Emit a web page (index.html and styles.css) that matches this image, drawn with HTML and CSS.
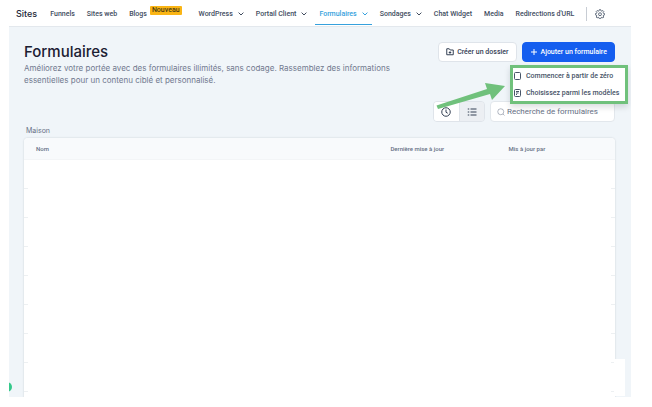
FILE: index.html
```html
<!DOCTYPE html>
<html lang="fr">
<head>
<meta charset="utf-8">
<title>Formulaires</title>
<link rel="stylesheet" href="styles.css">
</head>
<body>
<div class="app">
  <nav class="nav">
    <a class="brand" href="#">Sites</a>
    <a href="#">Funnels</a>
    <a href="#">Sites web</a>
    <a class="with-badge" href="#">Blogs<span class="badge">Nouveau</span></a>
    <a href="#">WordPress<svg class="chev" viewBox="0 0 6 4"><path d="M.6.6 3 3 5.400.6"/></svg></a>
    <a href="#">Portail Client<svg class="chev" viewBox="0 0 6 4"><path d="M.6.6 3 3 5.400.6"/></svg></a>
    <a class="active" href="#">Formulaires<svg class="chev" viewBox="0 0 6 4"><path d="M.6.6 3 3 5.400.6"/></svg></a>
    <a href="#">Sondages<svg class="chev" viewBox="0 0 6 4"><path d="M.6.6 3 3 5.400.6"/></svg></a>
    <a href="#">Chat Widget</a>
    <a href="#">Media</a>
    <a href="#">Redirections d'URL</a>
    <button class="settings" aria-label="Paramètres"><svg viewBox="0 0 24 24"><path d="M10.500 1.500h3l.7 2.800 2.200.9 2.500-1.500 2.200 2.200-1.500 2.500.9 2.200 2.800.7v2.600l-2.800.7-.9 2.200 1.500 2.500-2.200 2.200-2.500-1.500-2.200.9-.7 2.800h-3l-.7-2.800-2.200-.9-2.500 1.500-2.200-2.200 1.500-2.500-.9-2.200-2.800-.7v-2.600l2.800-.7.9-2.200-1.500-2.500 2.200-2.200 2.500 1.500 2.200-.9z"/><circle cx="12" cy="12.500" r="3.500"/></svg></button>
  </nav>

  <main class="page">
    <header class="head">
      <div class="intro">
        <h1>Formulaires</h1>
        <p>Améliorez votre portée avec des formulaires illimités, sans codage. Rassemblez des informations essentielles pour un contenu ciblé et personnalisé.</p>
      </div>
      <div class="actions">
        <button class="btn"><svg viewBox="0 0 16 16"><path d="M1.500 13.500v-12h5l2 2.500h6v9.500zM8 6.500v5M5.500 9h5"/></svg>Créer un dossier</button>
        <div class="add">
          <button class="btn primary"><svg viewBox="0 0 16 16"><path d="M8 2v12M2 8h12"/></svg>Ajouter un formulaire</button>
          <div class="menu">
            <button><svg viewBox="0 0 14 16"><rect x="1" y="1" width="12" height="14" rx="2"/></svg>Commencer à partir de zéro</button>
            <button><svg viewBox="0 0 14 16"><rect x="1" y="1" width="12" height="14" rx="2"/><path d="M4 5h6M4 8h5M4 11h2"/></svg>Choisissez parmi les modèles</button>
            <svg class="arrow" viewBox="0 0 70 30"><path d="M.500 24.500 51 8 49 2l20 3-13 14-2-6L2 28z"/></svg>
          </div>
        </div>
      </div>
    </header>

    <div class="tools">
      <div class="toggle">
        <button aria-label="Récents"><svg viewBox="0 0 20 20"><circle cx="10" cy="10" r="8.500"/><path d="M10 5v5.500l3.500 2"/></svg></button>
        <button class="on" aria-label="Liste"><svg viewBox="0 0 20 20"><path d="M7 4h12M7 10h12M7 16h12M1.500 4h3M1.500 10h3M1.500 16h3"/></svg></button>
      </div>
      <label class="search"><svg viewBox="0 0 16 16"><circle cx="7.500" cy="7.500" r="6"/><path d="m12 12 3 3"/></svg><input type="search" placeholder="Recherche de formulaires" aria-label="Recherche de formulaires"></label>
    </div>

    <div class="crumb">Maison</div>
    <table class="list">
      <thead><tr><th class="name">Nom</th><th class="date">Dernière mise à jour</th><th>Mis à jour par</th></tr></thead>
      <tbody>
        <tr><td colspan="3"></td></tr>
        <tr><td colspan="3"></td></tr>
        <tr><td colspan="3"></td></tr>
        <tr><td colspan="3"></td></tr>
        <tr><td colspan="3"></td></tr>
        <tr><td colspan="3"></td></tr>
        <tr><td colspan="3"></td></tr>
        <tr><td colspan="3"></td></tr>
        <tr><td colspan="3"></td></tr>
      </tbody>
    </table>
  </main>
  <div class="panel"></div>
  <div class="bubble"></div>
</div>
</body>
</html>
```
FILE: styles.css
```css
* { box-sizing: border-box; }
body { margin: 0; background: #fff; font: 500 7px/10px Roboto, sans-serif; color: #475467; }
button, input { font: inherit; color: inherit; border: 0; background: none; padding: 0; margin: 0; }
svg { fill: none; stroke: currentColor; flex: none; }
.app { position: relative; height: calc(100vh - 10px); margin: 0 21px 0 9px; overflow: hidden; background: #f0f5f9; }

.nav { display: flex; align-items: center; gap: 12px; height: 27px; padding: 2px 0 0 7px; background: #fff; border-bottom: 1px solid #e3e8ed; white-space: nowrap; }
.nav a { display: flex; align-items: center; color: #414c5e; text-decoration: none; }
.nav .brand { font: 500 9px/12px Inter, sans-serif; color: #1d2939; margin-right: 1px; }
.chev { width: 6px; height: 4px; margin-left: 5px; }
.nav .active { position: relative; color: #36a1dd; }
.active::after { content: ""; position: absolute; left: -4px; right: -4px; bottom: -6px; height: 1px; background: #36a1dd; }
.with-badge { margin-right: 5px; }
.badge { margin: -8px 0 0 3px; padding: 0 2px; height: 9px; line-height: 9px; border-radius: 1px; background: #fab515; color: #4b3a12; }
.settings { display: flex; align-items: center; height: 14px; padding-left: 8px; border-left: 1px solid #c8cdd4; }
.settings svg { width: 10px; height: 10px; stroke-width: 2; }

.page { padding: 15px 16px 0 15px; }
.head { display: flex; justify-content: space-between; align-items: flex-start; height: 59px; }
.intro { width: 392px; }
h1 { margin: 0; font: 500 15px/20px Inter, sans-serif; color: #1b2033; }
p { margin: 0; font: 400 8px/12px Inter, sans-serif; color: #70798f; }
.actions { display: flex; gap: 5px; white-space: nowrap; }
.btn { display: flex; align-items: center; gap: 3px; height: 20px; padding: 0 7px; border: 1px solid #dfe4ea; border-radius: 4px; background: #fff; color: #344054; }
.btn svg { width: 8px; height: 8px; stroke-width: 2; }
.primary { background: #155eef; border-color: #155eef; color: #fff; }
.add { position: relative; }
.menu { position: absolute; z-index: 2; top: 23px; right: -13px; display: grid; gap: 1px; width: 118px; padding: 0 0 0 1px; border: 3px solid #70c17c; background: #fff; box-shadow: 0 3px 6px #10182826; }
.menu button { display: flex; align-items: center; gap: 5px; height: 16px; color: #475467; }
.menu button svg { width: 7px; height: 8px; stroke-width: 2; }
.menu .arrow { position: absolute; right: 119px; top: 13px; width: 70px; height: 30px; fill: #70c17c; stroke: none; }

.tools { display: flex; justify-content: flex-end; gap: 5px; height: 21px; }
.toggle { display: flex; width: 52px; border: 1px solid #dfe4ea; border-radius: 4px; overflow: hidden; }
.toggle button { flex: 1; display: flex; align-items: center; justify-content: center; background: #fff; color: #344054; }
.toggle .on { background: #eceff3; border-left: 1px solid #dfe4ea; }
.toggle svg { width: 10px; height: 10px; stroke-width: 2; }
.search { display: flex; align-items: center; gap: 2px; width: 125px; padding: 0 2px 0 6px; border: 1px solid #e2e7ec; border-radius: 4px; background: #fff; color: #667085; }
.search svg { width: 8px; height: 8px; stroke-width: 1; }
.search input { flex: 1; min-width: 0; outline: 0; font: 400 8px/12px Roboto, sans-serif; }
.search input::placeholder { color: #667085; opacity: 1; }

.crumb { margin: 4px 2px 3px; font: 400 7px/9px Inter, sans-serif; color: #667085; }
.list { width: 100%; border-spacing: 0; table-layout: fixed; background: #fff; border-radius: 4px 4px 0 0; box-shadow: 0 0 2px #1018282e; overflow: hidden; }
th { height: 22px; padding: 0; text-align: left; font: 500 6px/8px Roboto, sans-serif; color: #667085; background: #f8fafc; border-bottom: 1px solid #f3f5f7; }
.name { width: 62%; padding-left: 12px; }
.date { width: 20%; }
td { height: 29px; padding: 0; background: linear-gradient(to right, #edf0f2 4px, transparent 4px calc(100% - 4px), #edf0f2 calc(100% - 4px)) bottom / 100% 1px no-repeat; }
.panel { position: absolute; right: 6px; bottom: 1px; width: 11px; height: 37px; background: #fff; }
.bubble { position: absolute; left: -7px; bottom: 5px; width: 10px; height: 10px; border-radius: 50%; background: #35c98b; }
```
